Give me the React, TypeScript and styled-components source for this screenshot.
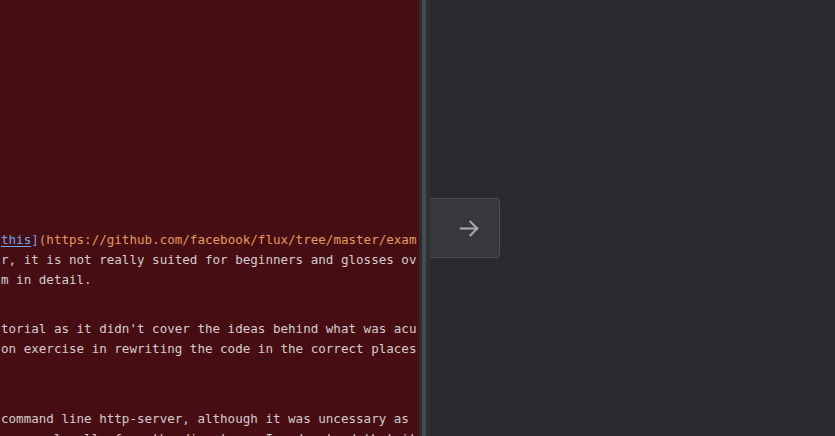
import React from "react";
import styled, { createGlobalStyle } from "styled-components";

const Global = createGlobalStyle`
  html, body { margin: 0; padding: 0; width: 835px; height: 436px; overflow: hidden; }
  body { background: #2b2b2f; }
`;

const Frame = styled.div`
  display: flex;
  width: 835px;
  height: 436px;
  overflow: hidden;
`;

const Editor = styled.div`
  width: 419px;
  flex: none;
  background: #460e13;
  padding-top: 230px;
  box-sizing: border-box;
  overflow: hidden;
  font-family: "DejaVu Sans Mono", "Liberation Mono", monospace;
  font-size: 12.55px;
  color: #d6cbcd;
`;

const Line = styled.div<{ $gap?: number }>`
  height: 20px;
  line-height: 20px;
  white-space: pre;
  margin-top: ${(p) => p.$gap ?? 0}px;
  padding-left: 1px;
`;

const Link = styled.span`
  color: #6ea5e6;
  text-decoration: underline;
  text-underline-offset: 2px;
`;

const Bracket = styled.span`
  color: #6ea5e6;
`;

const Url = styled.span`
  color: #e49a5e;
`;

const Divider = styled.div`
  width: 11px;
  flex: none;
  background: linear-gradient(
    to right,
    #262e31 0px,
    #262e31 3px,
    #434c50 3px,
    #434c50 7px,
    #2a3235 7px,
    #2a3235 11px
  );
`;

const Preview = styled.div`
  flex: 1;
  background: #2b2b2f;
  padding-top: 198px;
  display: flex;
  flex-direction: column;
  align-items: flex-start;
`;

const ToggleButton = styled.button`
  width: 70px;
  height: 60px;
  box-sizing: border-box;
  background: #38383c;
  border: 1px solid #4b4b50;
  border-left: none;
  border-radius: 0 4px 4px 0;
  display: flex;
  align-items: center;
  justify-content: center;
  padding: 0 0 0 9px;
  color: #a9a9ab;
  cursor: pointer;
`;

export default function App() {
  return (
    <>
      <Global />
      <Frame>
        <Editor>
          <Line>
            <Link>this</Link>
            <Bracket>]</Bracket>
            <Url>(https://github.com/facebook/flux/tree/master/exam</Url>
          </Line>
          <Line>r, it is not really suited for beginners and glosses ov</Line>
          <Line>m in detail.</Line>
          <Line $gap={29}>torial as it didn't cover the ideas behind what was acu</Line>
          <Line>on exercise in rewriting the code in the correct places</Line>
          <Line $gap={50}>command line http-server, although it was uncessary as</Line>
          <Line>   run locally from the directory. I understand that it</Line>
        </Editor>
        <Divider />
        <Preview>
          <ToggleButton aria-label="Show preview">
            <svg width="23" height="23" viewBox="0 0 24 24" fill="none" stroke="currentColor" strokeWidth="2.2" strokeLinecap="square">
              <path d="M3 12h17" />
              <path d="M13 5l7 7-7 7" />
            </svg>
          </ToggleButton>
        </Preview>
      </Frame>
    </>
  );
}
